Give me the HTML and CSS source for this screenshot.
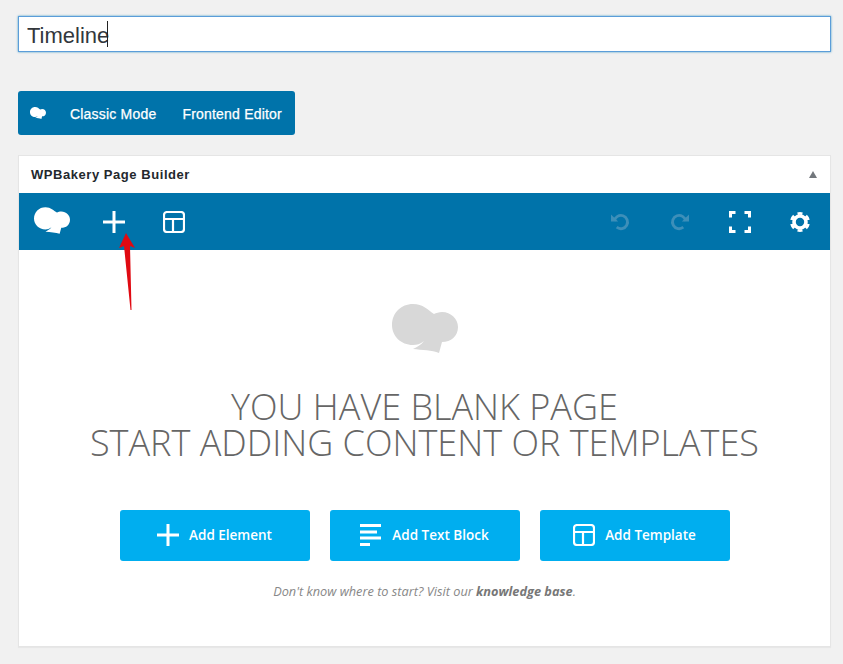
FILE: index.html
```html
<!DOCTYPE html>
<html lang="en">
<head>
<meta charset="utf-8">
<title>Timeline</title>
<link rel="stylesheet" href="styles.css">
</head>
<body>
<svg class="defs" width="0" height="0" aria-hidden="true">
  <symbol id="logo" viewBox="0 0 66 49"><path d="M21 0C31 0 36 6 42 10C44 9 47 8 50 8C59 8 66 15 66 23C66 32 59 38 50 38L47 49C40 46 30 46 21 45C25 43 29 41 32 37C28 40 25 41 21 41C9 41 0 32 0 21C0 9 9 0 21 0Z"/></symbol>
  <symbol id="plus" viewBox="0 0 22 22"><path d="M11 0V22M0 11H22" fill="none" stroke="currentColor" stroke-width="3" stroke-linecap="round"/></symbol>
  <symbol id="tpl" viewBox="0 0 22 22"><path d="M4 1H18A3 3 0 0 1 21 4V18A3 3 0 0 1 18 21H4A3 3 0 0 1 1 18V4A3 3 0 0 1 4 1ZM1 8H21M10 8V21" fill="none" stroke="currentColor" stroke-width="2.200"/></symbol>
</svg>

<input class="title-input" type="text" value="Timeline" aria-label="Title">
<div class="caret-wrap"><span class="caret"></span></div>

<div class="mode-bar">
  <svg class="mode-logo"><use href="#logo"/></svg>
  <span class="mode-item">Classic Mode</span>
  <span class="mode-item">Frontend Editor</span>
</div>

<section class="panel">
  <header class="panel-head">
    <h2 class="panel-title">WPBakery Page Builder</h2>
    <span class="collapse"></span>
  </header>
  <nav class="toolbar">
    <svg class="tb-logo"><use href="#logo"/></svg>
    <svg class="tb-icon tb-plus"><use href="#plus"/></svg>
    <svg class="tb-icon tb-tpl"><use href="#tpl"/></svg>
    <span class="spacer"></span>
    <svg class="tb-icon tb-undo" viewBox="0 0 20 20"><path d="M3.500 9.500A7 7 0 1 1 6 16" fill="none" stroke="currentColor" stroke-width="3"/><path d="M0 2.500V10H7.500Z" fill="currentColor"/></svg>
    <svg class="tb-icon tb-redo" viewBox="0 0 20 20"><path d="M16.500 9.500A7 7 0 1 0 14 16" fill="none" stroke="currentColor" stroke-width="3"/><path d="M20 2.500V10H12.500Z" fill="currentColor"/></svg>
    <svg class="tb-icon tb-full" viewBox="0 0 22 22"><path d="M1.500 6.500V1.500H6.500M15.500 1.500H20.500V6.500M20.500 15.500V20.500H15.500M6.500 20.500H1.500V15.500" fill="none" stroke="currentColor" stroke-width="3"/></svg>
    <svg class="tb-icon tb-gear" viewBox="0 0 20 20"><circle cx="10" cy="10" r="6" fill="none" stroke="currentColor" stroke-width="3.600"/><circle cx="10" cy="10" r="8.600" fill="none" stroke="currentColor" stroke-width="2.800" pathLength="60" stroke-dasharray="5.500 4.500" stroke-dashoffset="-2.250"/></svg>
  </nav>
  <svg class="arrow" viewBox="0 0 16 77"><path d="M7 0L16 15L11 13L12.500 77L11.500 77L5 13L0 15Z"/></svg>

  <div class="blank">
    <svg class="blank-logo"><use href="#logo"/></svg>
    <h1 class="blank-title">YOU HAVE BLANK PAGE<br>START ADDING CONTENT OR TEMPLATES</h1>
    <div class="actions">
      <a class="action">
        <svg class="action-icon"><use href="#plus"/></svg>Add Element
      </a>
      <a class="action">
        <svg class="action-icon" viewBox="0 0 22 22"><path d="M0 1.500H21M0 8H17M0 14H21M0 20.500H10" fill="none" stroke="currentColor" stroke-width="2.800"/></svg>Add Text Block
      </a>
      <a class="action">
        <svg class="action-icon"><use href="#tpl"/></svg>Add Template
      </a>
    </div>
    <p class="hint">Don't know where to start? Visit our <strong>knowledge base</strong>.</p>
  </div>
</section>
</body>
</html>
```
FILE: styles.css
```css
* { box-sizing: border-box; }
html, body { margin: 0; }
body {
  width: 843px;
  height: 664px;
  padding: 16px 12px 0 18px;
  background: #f1f1f1;
  font-family: "Liberation Sans", Arial, sans-serif;
  overflow: hidden;
}
.defs { display: block; height: 0; }

.title-input {
  display: block;
  width: 813px;
  height: 36px;
  padding: 3px 8px 0;
  border: 1px solid #5b9dd9;
  box-shadow: 0 0 2px rgba(30, 140, 190, .8);
  outline: 0;
  background: #fff;
  color: #32373c;
  font: 22px/30px "Liberation Sans", Arial, sans-serif;
}
.caret-wrap { position: relative; height: 0; }
.caret {
  position: absolute;
  left: 89px;
  top: -31px;
  width: 1px;
  height: 26px;
  background: #222;
}

.mode-bar {
  display: flex;
  align-items: center;
  width: 277px;
  height: 44px;
  margin-top: 39px;
  padding: 1px 0 0 12px;
  border-radius: 3px;
  background: #0073aa;
  color: #fff;
  font-size: 14px;
  font-weight: 400;
  letter-spacing: .2px;
}
.mode-logo { flex: none; width: 16px; height: 12px; margin: -2px 24px 0 0; fill: #fff; }
.mode-item { flex: none; margin-right: 26px; white-space: nowrap; -webkit-text-stroke: .25px #fff; }

.panel {
  position: relative;
  width: 813px;
  height: 492px;
  margin-top: 20px;
  border: 1px solid #e5e5e5;
  background: #fff;
  box-shadow: 0 1px 1px rgba(0, 0, 0, .04);
}
.panel-head {
  display: flex;
  align-items: center;
  justify-content: space-between;
  height: 37px;
  padding: 0 13px 1px 12px;
}
.panel-title {
  margin: 0;
  color: #23282d;
  font-size: 13px;
  font-weight: 700;
  letter-spacing: .55px;
}
.collapse {
  width: 0;
  height: 0;
  border-left: 4.500px solid transparent;
  border-right: 4.500px solid transparent;
  border-bottom: 7px solid #72777c;
}

.toolbar {
  display: flex;
  align-items: center;
  height: 57px;
  padding-left: 15px;
  background: #0073aa;
  color: #fff;
}
.tb-logo { flex: none; width: 36px; height: 27px; fill: #fff; margin-top: -3px; }
.tb-icon { flex: none; }
.tb-plus { width: 22px; height: 22px; margin-left: 33px; }
.tb-tpl { width: 22px; height: 22px; margin-left: 38px; }
.spacer { flex: 1; }
.tb-undo, .tb-redo { width: 19px; height: 19px; color: #3d8fb9; }
.tb-redo { margin-left: 40px; }
.tb-full { width: 22px; height: 22px; margin: 0 0 0 40px; }
.tb-gear { width: 20px; height: 20px; margin: 0 20px 0 39px; }

.arrow {
  position: absolute;
  left: 100px;
  top: 77px;
  width: 16px;
  height: 77px;
  fill: #e00a12;
}

.blank {
  display: flex;
  flex-direction: column;
  align-items: center;
  padding-top: 54px;
}
.blank-logo { flex: none; width: 66px; height: 49px; fill: #d8d8d8; margin-left: 1px; }
.blank-title {
  margin: 36px 0 0;
  color: #666;
  font: 300 36px/36px "Open Sans", sans-serif;
  text-align: center;
}
.actions { display: flex; gap: 20px; margin-top: 49px; }
.action {
  display: flex;
  align-items: center;
  justify-content: center;
  gap: 10px;
  width: 190px;
  height: 51px;
  padding-bottom: 1px;
  border-radius: 3px;
  background: #00aeef;
  color: #fff;
  font: 600 13.500px "Open Sans", sans-serif;
}
.action-icon { width: 22px; height: 22px; flex: none; }
.hint {
  margin: 22px 0 0;
  color: #888;
  font: italic 12.750px/16px "Open Sans", sans-serif;
}
.hint strong { font-weight: 700; color: #777; }
```
